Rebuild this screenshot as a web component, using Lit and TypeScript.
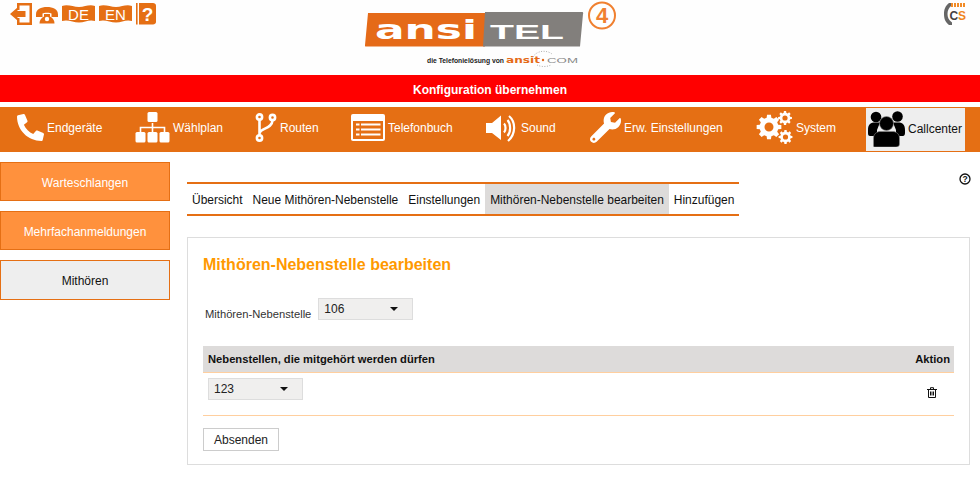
import { LitElement, html, css, svg } from 'lit';
import { customElement } from 'lit/decorators.js';

const ORANGE = '#e56f14';

// gear outline centred at cx,cy
function gear(cx: number, cy: number, r: number, teeth: number, hole: number) {
  const pts: string[] = [];
  const step = (Math.PI * 2) / teeth;
  for (let i = 0; i < teeth; i++) {
    const a = i * step;
    const offs: [number, number][] = [
      [-0.32, r * 0.76],
      [-0.2, r],
      [0.2, r],
      [0.32, r * 0.76],
    ];
    for (const [o, rad] of offs) {
      const t = a + o * step;
      pts.push(`${(cx + Math.cos(t) * rad).toFixed(2)} ${(cy + Math.sin(t) * rad).toFixed(2)}`);
    }
  }
  return svg`<path fill-rule="evenodd" d="M${pts.join('L')}Z M${cx - hole} ${cy}a${hole} ${hole} 0 1 0 ${hole * 2} 0a${hole} ${hole} 0 1 0 ${-hole * 2} 0Z" />`;
}

const phone = html`<svg width="27" height="29" viewBox="0 0 512 512" fill="#fff">
  <path transform="matrix(-1 0 0 1 512 0)" d="M493.4 24.6l-104-24c-11.3-2.6-22.9 3.3-27.5 13.9l-48 112c-4.2 9.8-1.4 21.3 6.9 28l60.6 49.6c-36 76.7-98.9 140.5-177.2 177.2l-49.6-60.6c-6.8-8.3-18.2-11.1-28-6.9l-112 48C3.9 366.5-2 378.1.6 389.4l24 104C27.1 504.2 36.7 512 48 512c256.1 0 464-207.5 464-464 0-11.2-7.7-20.9-18.6-23.4z" />
</svg>`;

const sitemap = html`<svg width="35" height="31" viewBox="0 0 35 31">
  <g fill="none" stroke="#fff" stroke-width="1.6">
    <path d="M17.5 11V20M5.5 21V15.5H29.5V21" />
  </g>
  <g fill="#fff">
    <rect x="12.5" y="0" width="10" height="10" rx="1.5" />
    <rect x="0.5" y="20" width="10" height="10.5" rx="1.5" />
    <rect x="12.5" y="20" width="10" height="10.5" rx="1.5" />
    <rect x="24.5" y="20" width="10" height="10.5" rx="1.5" />
  </g>
</svg>`;

const routes = html`<svg width="22" height="29" viewBox="0 0 22 29" fill="none" stroke="#fff" stroke-width="2.6">
  <circle cx="4.5" cy="4" r="2.6" />
  <circle cx="4.5" cy="25" r="2.6" />
  <circle cx="17.5" cy="4.5" r="2.6" />
  <path d="M4.5 7V22M4.8 20C5.5 15 17 16 17.5 7.5" />
</svg>`;

const book = html`<svg width="34" height="28" viewBox="0 0 34 28">
  <rect x="0" y="0" width="34" height="27" rx="2" fill="#fff" />
  <rect x="2" y="7" width="30" height="18" fill="${ORANGE}" />
  <g fill="#fff">
    <rect x="5" y="9.5" width="3.5" height="2" />
    <rect x="5" y="14.5" width="3.5" height="2" />
    <rect x="5" y="19.5" width="3.5" height="2" />
    <rect x="10" y="9.5" width="19.5" height="2" />
    <rect x="10" y="14.5" width="19.5" height="2" />
    <rect x="10" y="19.5" width="19.5" height="2" />
  </g>
</svg>`;

const sound = html`<svg width="32" height="28" viewBox="0 0 32 28">
  <path fill="#fff" d="M0 9H6L15 1.5V26L6 19H0Z" />
  <g fill="none" stroke="#fff" stroke-width="2.2">
    <path d="M18 9.5C20 11.5 20 16.5 18 18.5" />
    <path d="M21.5 6C25 10 25 18 21.5 22" />
    <path d="M23 2C30 8 30 20 22 27" />
  </g>
</svg>`;

const wrench = html`<svg width="31" height="31" viewBox="0 0 512 512" fill="#fff">
  <path d="M507.73 109.1c-2.24-9.03-13.54-12.09-20.12-5.51l-74.36 74.36-67.88-11.31-11.31-67.88 74.36-74.36c6.62-6.62 3.43-17.9-5.66-20.16-47.38-11.74-99.55.91-136.58 37.93-39.64 39.64-50.55 97.1-34.05 147.2L18.74 402.76c-24.99 24.99-24.99 65.51 0 90.5 24.99 24.99 65.51 24.99 90.5 0l213.21-213.21c50.12 16.71 107.47 5.68 147.37-34.22 37.07-37.07 49.7-89.32 37.91-136.73zM64 472c-13.25 0-24-10.75-24-24 0-13.26 10.75-24 24-24s24 10.74 24 24c0 13.25-10.75 24-24 24z" />
</svg>`;

const gears = html`<svg width="37" height="33" viewBox="0 0 37 33" fill="#fff">
  ${gear(13, 16, 12.5, 8, 4.5)}
  ${gear(29, 7, 7, 8, 2.6)}
  ${gear(29.5, 26, 7, 8, 2.6)}
</svg>`;

const users = html`<svg width="37" height="36" viewBox="0 0 37 36" fill="#000">
  <circle cx="8" cy="6" r="5.3" />
  <circle cx="29.5" cy="5.5" r="5.3" />
  <path d="M0 19C0 13 3 11.500 7 11.500H12L9 19V25H2C0.5 25 0 24 0 22Z" />
  <path d="M37 19C37 13 34 11.500 30 11.500H25L28 19V25H35C36 25 37 24 37 22Z" />
  <circle cx="18.500" cy="12.500" r="7" stroke="#8a8a8a" stroke-width="0.6" />
  <path d="M5.500 35V27C5.500 23 9 20.500 12 20.500H25C28 20.500 31.500 23 31.500 27V33C31.500 35 30 36 28 36H8C6.500 36 5.500 36 5.500 35Z" stroke="#8a8a8a" stroke-width="0.6" />
</svg>`;

const navItems = [
  { label: 'Endgeräte', icon: phone },
  { label: 'Wählplan', icon: sitemap },
  { label: 'Routen', icon: routes },
  { label: 'Telefonbuch', icon: book },
  { label: 'Sound', icon: sound },
  { label: 'Erw. Einstellungen', icon: wrench },
  { label: 'System', icon: gears },
];

const tabs = ['Übersicht', 'Neue Mithören-Nebenstelle', 'Einstellungen', 'Mithören-Nebenstelle bearbeiten', 'Hinzufügen'];

@customElement('app-root')
export class AppRoot extends LitElement {
  static styles = css`
    :host {
      display: block;
      height: 479px;
      overflow: hidden;
      background: #fff;
      font-family: 'Liberation Sans', Arial, sans-serif;
      font-size: 12px;
      color: #111;
    }
    .top {
      height: 75px;
      display: flex;
      justify-content: space-between;
      position: relative;
      background: #fefefe;
    }
    .quick {
      display: flex;
      gap: 4px;
      padding: 3px 0 0 10px;
      height: 22px;
    }
    .quick svg {
      display: block;
    }
    .logo {
      position: absolute;
      left: 365px;
      top: 0;
    }
    .cs {
      padding: 3px 14px 0 0;
    }
    .apply {
      height: 27px;
      line-height: 30px;
      background: #ff0000;
      color: #fff;
      font-weight: bold;
      text-align: center;
    }
    .nav {
      margin-top: 5px;
      height: 45px;
      background: #e56f14;
      display: grid;
      grid-template-columns: 118px 120px 96px 135px 104px 166px 110px 99px;
      align-items: center;
      padding-left: 17px;
      color: #fff;
    }
    .nav-item {
      display: flex;
      align-items: center;
      gap: 3px;
      margin-bottom: 4px;
    }
    .nav-item svg {
      display: block;
    }
    .nav-item.current {
      height: 43px;
      box-sizing: border-box;
      margin-bottom: 0;
      padding: 0 0 2px 2px;
      background: #eeeeee;
      color: #111;
    }
    .main {
      display: flex;
      position: relative;
    }
    .side {
      width: 170px;
      padding-top: 10px;
      display: flex;
      flex-direction: column;
      gap: 10px;
    }
    .side-btn {
      height: 39px;
      box-sizing: border-box;
      border: 1px solid #e56f14;
      padding-top: 2px;
      background: #ff913d;
      color: #fff;
      display: flex;
      align-items: center;
      justify-content: center;
    }
    .side-btn.active {
      height: 40px;
      background: #eeeeee;
      color: #111;
    }
    .content {
      margin-left: 17px;
      width: 783px;
    }
    .tabs {
      display: inline-flex;
      margin-top: 30px;
      border-top: 2px solid #e56f14;
      border-bottom: 2px solid #e56f14;
      font-size: 11.98px;
    }
    .tab {
      height: 30px;
      line-height: 32px;
      padding: 0 5px;
    }
    .tab.active {
      background: #dddbda;
    }
    .help {
      position: absolute;
      right: 9px;
      top: 21px;
      display: block;
    }
    .panel {
      margin-top: 21px;
      height: 228px;
      box-sizing: border-box;
      border: 1px solid #dddddd;
      padding: 0 15px;
    }
    h2 {
      margin: 0;
      padding-top: 18px;
      height: 42px;
      box-sizing: border-box;
      font-size: 16px;
      line-height: 18px;
      font-weight: bold;
      color: #ff9900;
    }
    .field {
      display: flex;
      align-items: flex-start;
      gap: 7px;
      padding: 18px 0 0 2px;
      height: 58px;
      box-sizing: border-box;
      color: #333;
    }
    .field label {
      margin-top: 9px;
      line-height: 14px;
      font-size: 11.2px;
    }
    .select {
      width: 95px;
      height: 22px;
      box-sizing: border-box;
      border: 1px solid #dddddd;
      background: #f0efee;
      color: #222;
      padding: 0 5px;
      line-height: 21px;
      display: flex;
      justify-content: space-between;
      align-items: center;
    }
    .caret {
      width: 0;
      height: 0;
      margin-right: 9px;
      border-left: 4px solid transparent;
      border-right: 4px solid transparent;
      border-top: 4px solid #111;
    }
    .thead {
      margin-top: 8px;
      height: 27px;
      box-sizing: border-box;
      background: #dddbda;
      border-bottom: 1px solid #ffcf9f;
      display: flex;
      justify-content: space-between;
      align-items: center;
      padding: 0 4px 0 5px;
      font-size: 11.2px;
      font-weight: bold;
    }
    .row {
      height: 43px;
      box-sizing: border-box;
      border-bottom: 1px solid #ffcf9f;
      padding: 5px 0 0 5px;
      display: flex;
      justify-content: space-between;
      align-items: flex-start;
    }
    .trash {
      display: block;
      margin: 9px 17px 0 0;
    }
    button {
      all: unset;
      display: block;
      box-sizing: border-box;
      margin-top: 12px;
      width: 76px;
      height: 23px;
      border: 1px solid #cccccc;
      text-align: center;
      line-height: 22px;
      color: #222;
    }
  `;

  render() {
    return html`
      <div class="top">
        <div class="quick">
          <svg width="22" height="22" viewBox="0 0 22 22" fill="${ORANGE}">
            <path d="M7 0H22V22H7V15H9.5V19.5H19.5V2.5H9.5V7H7Z" />
            <path d="M0 11L7.5 4.5V8H15.5V14H7.5V17.5Z" />
          </svg>
          <svg width="22" height="22" viewBox="0 0 22 22" fill="${ORANGE}" style="margin-top:2px">
            <path d="M0 9.5C0 4 5 2 11 2S22 4 22 9.5V12H15.5V8.5C14.5 7.5 7.5 7.5 6.5 8.5V12H0Z" />
            <path d="M8 9H14V11.5C17 13 18.5 15.5 18.5 18.500H3.5C3.5 15.5 5 13 8 11.5Z" />
            <circle cx="11" cy="14" r="2.2" fill="#fff" />
          </svg>
          <svg width="33" height="18" viewBox="0 0 33 18" style="margin-top:2px">
            <path fill="${ORANGE}" d="M0 1C6-1 11 2 17 2S27-1 33 1V16C27 14 23 17.500 17 17.500S6 14 0 16Z" />
            <text x="16.5" y="15" text-anchor="middle" fill="#fff" font-size="15" font-family="Liberation Sans">DE</text>
          </svg>
          <svg width="33" height="18" viewBox="0 0 33 18" style="margin-top:2px">
            <path fill="${ORANGE}" d="M0 1C6-1 11 2 17 2S27-1 33 1V16C27 14 23 17.500 17 17.500S6 14 0 16Z" />
            <text x="16.5" y="15" text-anchor="middle" fill="#fff" font-size="15" font-family="Liberation Sans">EN</text>
          </svg>
          <svg width="20" height="22" viewBox="0 0 20 22">
            <rect x="0" y="0" width="1.6" height="21.5" fill="${ORANGE}" />
            <path fill="${ORANGE}" d="M3 0H17C18.5 0 20 1 20 2.5V19C20 20.5 18.5 21.5 17 21.5H3Z" />
            <text x="11.5" y="18" text-anchor="middle" fill="#fff" font-size="19" font-weight="bold" font-family="Liberation Sans">?</text>
          </svg>
        </div>
        <svg class="logo" width="252" height="70" viewBox="0 0 252 70">
          <path fill="#e56a18" d="M3 13H120V46.500H1C0 46.500 0 46 0 45Z" />
          <path fill="#827f7c" d="M120 12H217C218 12 218.500 13 218 14L215 46.500H118Z" />
          <text x="10" y="38.500" fill="#fff" font-family="DejaVu Sans" font-weight="bold" font-size="27" textLength="102" lengthAdjust="spacingAndGlyphs">ansi</text>
          <text x="125" y="38.500" fill="#fff" font-family="Liberation Sans" font-weight="bold" font-size="21" textLength="74" lengthAdjust="spacingAndGlyphs">TEL</text>
          <text x="62" y="62.500" fill="#222" font-family="Liberation Sans" font-weight="bold" font-size="6.500" textLength="77" lengthAdjust="spacingAndGlyphs">die Telefonielösung von</text>
          <text x="141" y="63" fill="#e56a18" font-family="DejaVu Sans" font-weight="bold" font-size="9" textLength="34" lengthAdjust="spacingAndGlyphs">ansit</text>
          <text x="182" y="63" fill="#888" font-family="Liberation Sans" font-size="7" textLength="31" lengthAdjust="spacingAndGlyphs">COM</text>
          <circle cx="178" cy="60" r="1.200" fill="#e56a18" />
          <path d="M168 57C172 50 182 50 187 54M172 65C176 67 182 67 186 65" fill="none" stroke="#999" stroke-width="0.8" stroke-dasharray="1 1.500" />
          <circle cx="237" cy="15.500" r="13" fill="none" stroke="#f08030" stroke-width="2" />
          <text x="237" y="23" text-anchor="middle" fill="#f08030" font-family="Liberation Sans" font-weight="bold" font-size="22">4</text>
        </svg>
        <div class="cs">
          <svg width="22" height="22" viewBox="0 0 22 22">
            <path fill="#666" d="M7 0H5C1 3 0 7 0 11S1 19 5 22H8V19.500C4.500 17 3.500 14 3.500 11S4.500 5 7 3Z" />
            <path stroke="#f28c28" stroke-width="4" stroke-dasharray="2 1" d="M7 2H22" />
            <text x="5.500" y="16.500" fill="#444" font-family="Liberation Sans" font-weight="bold" font-size="12">C</text>
            <text x="14" y="16.500" fill="#f0851e" font-family="Liberation Sans" font-weight="bold" font-size="12">S</text>
          </svg>
        </div>
      </div>
      <div class="apply">Konfiguration übernehmen</div>
      <nav class="nav">
        ${navItems.map((it) => html`<div class="nav-item">${it.icon}<span>${it.label}</span></div>`)}
        <div class="nav-item current">${users}<span>Callcenter</span></div>
      </nav>
      <div class="main">
        <aside class="side">
          <div class="side-btn">Warteschlangen</div>
          <div class="side-btn">Mehrfachanmeldungen</div>
          <div class="side-btn active">Mithören</div>
        </aside>
        <section class="content">
          <div class="tabs">
            ${tabs.map((t, i) => html`<div class="tab ${i === 3 ? 'active' : ''}">${t}</div>`)}
          </div>
          <svg class="help" width="12" height="12" viewBox="0 0 12 12">
            <circle cx="6" cy="6" r="5" fill="none" stroke="#111" stroke-width="1.300" />
            <text x="6" y="9" text-anchor="middle" fill="#111" font-size="8.500" font-weight="bold" font-family="Liberation Sans">?</text>
          </svg>
          <div class="panel">
            <h2>Mithören-Nebenstelle bearbeiten</h2>
            <div class="field">
              <label>Mithören-Nebenstelle</label>
              <div class="select"><span>106</span><i class="caret"></i></div>
            </div>
            <div class="thead"><span>Nebenstellen, die mitgehört werden dürfen</span><span>Aktion</span></div>
            <div class="row">
              <div class="select"><span>123</span><i class="caret"></i></div>
              <svg class="trash" width="10" height="11" viewBox="0 0 10 11" fill="none" stroke="#111" stroke-width="1">
                <path d="M0 2.500H10M3.500 2.500V0.700H6.500V2.500M1.500 2.500V10.500H8.500V2.500M3.500 4.500V8.500M5 4.500V8.500M6.500 4.500V8.500" />
              </svg>
            </div>
            <button>Absenden</button>
          </div>
        </section>
      </div>
    `;
  }
}
